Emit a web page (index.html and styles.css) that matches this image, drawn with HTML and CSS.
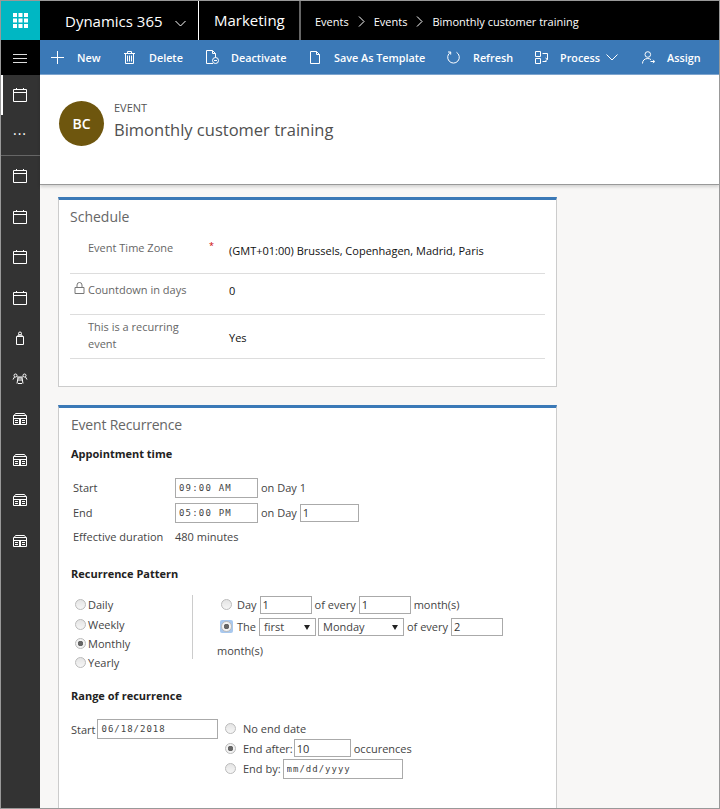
FILE: index.html
```html
<!DOCTYPE html>
<html lang="en">
<head>
    <meta charset="UTF-8">
    <title>Bimonthly customer training</title>
    <link rel="stylesheet" href="styles.css">
</head>
<body>
<svg class="icon-defs" width="0" height="0">
    <symbol id="cal" viewBox="0 0 16 16"><path d="M1.500 2.500h13v12h-13zM1.500 5.500h13M4.500 1v2M11.500 1v2" fill="none" stroke="currentColor"/></symbol>
    <symbol id="dash" viewBox="0 0 16 16"><path d="M2.500 4l1-1.500h9l1 1.500M1.500 4.500h13v9h-13zM1.500 7.500h13M7.500 7.500v6M8.500 7.500v6M3 9.500h3M10 9.500h3M3 11.500h3M10 11.500h3" fill="none" stroke="currentColor"/></symbol>
</svg>
<div class="page">
    <div class="topbar">
        <div class="waffle">
            <svg width="15" height="15" viewBox="0 0 15 15" fill="#fff"><path d="M0 0h4v4H0zM5.500 0h4v4h-4zM11 0h4v4h-4zM0 5.500h4v4H0zM5.500 5.500h4v4h-4zM11 5.500h4v4h-4zM0 11h4v4H0zM5.500 11h4v4h-4zM11 11h4v4h-4z"/></svg>
        </div>
        <div class="app-name">Dynamics 365
            <svg class="app-chevron" width="11" height="7" viewBox="0 0 11 7"><path d="M.5 1l5 5 5-5" fill="none" stroke="#fff"/></svg>
        </div>
        <div class="module-name">Marketing</div>
        <div class="crumbs">
            <span>Events</span>
            <svg width="7" height="11" viewBox="0 0 7 11"><path d="M1 .5l5 5-5 5" fill="none" stroke="#fff"/></svg>
            <span>Events</span>
            <svg width="7" height="11" viewBox="0 0 7 11"><path d="M1 .5l5 5-5 5" fill="none" stroke="#fff"/></svg>
            <span>Bimonthly customer training</span>
        </div>
    </div>

    <div class="main">
        <div class="sidenav">
            <div class="burger"><span></span><span></span><span></span></div>
            <div class="nav-item nav-active"><svg width="16" height="16"><use href="#cal"/></svg></div>
            <div class="nav-more">...</div>
            <div class="nav-group">
                <div class="nav-item"><svg width="16" height="16"><use href="#cal"/></svg></div>
                <div class="nav-item"><svg width="16" height="16"><use href="#cal"/></svg></div>
                <div class="nav-item"><svg width="16" height="16"><use href="#cal"/></svg></div>
                <div class="nav-item"><svg width="16" height="16"><use href="#cal"/></svg></div>
                <div class="nav-item">
                    <svg width="16" height="16" viewBox="0 0 16 16"><path d="M4.500 6.500h7v8h-7zM6 6.500v-1.500h4v1.500M8 5a1.500 1.500 0 1 0 0-3 1.500 1.500 0 0 0 0 3z" fill="none" stroke="currentColor"/></svg>
                </div>
                <div class="nav-item">
                    <svg width="16" height="16" viewBox="0 0 16 16"><path d="M2 4.500a1.500 1.500 0 1 0 3 0 1.500 1.500 0 0 0-3 0zM11 4.500a1.500 1.500 0 1 0 3 0 1.500 1.500 0 0 0-3 0zM1 8.500l1.500-2.500M15 8.500L13.500 6M5 6h6M5.500 7h5M6 7l-1 5.500M10 7l1 5.500M6 12.500h4M5.500 9h5" fill="none" stroke="currentColor"/></svg>
                </div>
                <div class="nav-item"><svg width="16" height="16"><use href="#dash"/></svg></div>
                <div class="nav-item"><svg width="16" height="16"><use href="#dash"/></svg></div>
                <div class="nav-item"><svg width="16" height="16"><use href="#dash"/></svg></div>
                <div class="nav-item"><svg width="16" height="16"><use href="#dash"/></svg></div>
            </div>
        </div>

        <div class="workspace">
            <div class="commandbar">
                <div class="cmd cmd-new">
                    <svg width="13" height="13" viewBox="0 0 13 13"><path d="M6.500 0v13M0 6.500h13" stroke="#fff" fill="none"/></svg>
                    <span>New</span>
                </div>
                <div class="cmd cmd-delete">
                    <svg width="11" height="13" viewBox="0 0 11 13"><path d="M1.500 2.500h8v10h-8zM0 2.500h11M3.500 2.500v-2h4v2M3.500 4.500v6M5.500 4.500v6M7.500 4.500v6" stroke="#fff" fill="none"/></svg>
                    <span>Delete</span>
                </div>
                <div class="cmd cmd-deactivate">
                    <svg width="13" height="14" viewBox="0 0 13 14"><path d="M7 13.500H.5V.5h6l3 3v4M6.500.5v3h3" stroke="#fff" fill="none"/><circle cx="9.500" cy="10.500" r="3" stroke="#fff" fill="none"/><path d="M8 10.500h3" stroke="#fff"/></svg>
                    <span>Deactivate</span>
                </div>
                <div class="cmd cmd-template">
                    <svg width="10" height="13" viewBox="0 0 10 13"><path d="M.5.500h6l3 3v9h-9zM6.500.500v3h3" stroke="#fff" fill="none"/></svg>
                    <span>Save As Template</span>
                </div>
                <div class="cmd cmd-refresh">
                    <svg width="13" height="13" viewBox="0 0 13 13"><path d="M3.500 1.300a5.800 5.800 0 1 0 6 0M3.700 3.600V1H1" stroke="#fff" fill="none"/></svg>
                    <span>Refresh</span>
                </div>
                <div class="cmd cmd-process">
                    <svg width="13" height="13" viewBox="0 0 13 13"><path d="M.5.500h5v5h-5zM.5 7.500h5v5h-5zM7.500 2.500h5v6M7.500 10.500h4M10.500 7l2 1.500-2 1" stroke="#fff" fill="none"/></svg>
                    <span>Process</span>
                    <svg width="12" height="7" viewBox="0 0 12 7"><path d="M.5.500l5.500 5.500 5.500-5.500" stroke="#fff" fill="none"/></svg>
                </div>
                <div class="cmd">
                    <svg width="13" height="13" viewBox="0 0 13 13"><path d="M3 3.500a2.800 2.800 0 1 0 5.600 0 2.800 2.800 0 0 0-5.600 0zM.5 12.500c0-3 2-5 5.300-5 1.500 0 2.500.5 3.200 1.200M8.500 10.500h4M11 8.800l1.700 1.700-1.700 1.700" stroke="#fff" fill="none"/></svg>
                    <span>Assign</span>
                </div>
            </div>

            <div class="record-header">
                <div class="avatar">BC</div>
                <div>
                    <div class="record-type">EVENT</div>
                    <div class="record-title">Bimonthly customer training</div>
                </div>
            </div>

            <div class="content">
                <div class="card card-schedule">
                    <h2>Schedule</h2>
                    <div class="field-row row-zone">
                        <div class="field-label">Event Time Zone<span class="required">*</span></div>
                        <div class="field-value">(GMT+01:00) Brussels, Copenhagen, Madrid, Paris</div>
                    </div>
                    <div class="field-row row-count">
                        <div class="field-label">
                            <svg class="lock" width="11" height="12" viewBox="0 0 11 12"><path d="M1 5.500h9v6H1zM3 5.500V3a2.500 2.500 0 0 1 5 0v2.500" stroke="#777" fill="none"/></svg>
                            Countdown in days
                        </div>
                        <div class="field-value">0</div>
                    </div>
                    <div class="field-row row-recur">
                        <div class="field-label">This is a recurring event</div>
                        <div class="field-value">Yes</div>
                    </div>
                </div>

                <div class="card card-recurrence">
                    <h2>Event Recurrence</h2>
                    <h3 class="time-title">Appointment time</h3>
                    <div class="time-grid">
                        <span>Start</span>
                        <div class="inline"><input class="mono time-input" value="09:00 AM"> on Day 1</div>
                        <span>End</span>
                        <div class="inline"><input class="mono time-input" value="05:00 PM"> on Day <input class="num-input day-input" value="1"></div>
                        <span>Effective duration</span>
                        <span>480 minutes</span>
                    </div>

                    <h3 class="pattern-title">Recurrence Pattern</h3>
                    <div class="pattern">
                        <div class="pattern-types">
                            <label><span class="radio"></span>Daily</label>
                            <label><span class="radio"></span>Weekly</label>
                            <label><span class="radio radio-on"></span>Monthly</label>
                            <label><span class="radio"></span>Yearly</label>
                        </div>
                        <div class="pattern-detail">
                            <div class="inline">
                                <span class="radio"></span>Day <input class="num-input" value="1"> of every <input class="num-input" value="1"> month(s)
                            </div>
                            <div class="inline">
                                <span class="radio radio-on radio-focus"></span>The
                                <div class="fake-select select-first">first</div>
                                <div class="fake-select select-day">Monday</div>
                                of every <input class="num-input" value="2">
                            </div>
                            <div class="wrap-text">month(s)</div>
                        </div>
                    </div>

                    <h3 class="range-title">Range of recurrence</h3>
                    <div class="range">
                        <div class="inline range-start">Start <input class="mono date-input" value="06/18/2018"></div>
                        <div class="range-end">
                            <div class="inline"><span class="radio"></span>No end date</div>
                            <div class="inline"><span class="radio radio-on"></span>End after: <input class="num-input after-input" value="10"> occurences</div>
                            <div class="inline range-by"><span class="radio"></span>End by: <input class="mono by-input" value="mm/dd/yyyy"></div>
                        </div>
                    </div>
                </div>
            </div>
        </div>
    </div>
</div>
</body>
</html>
```

FILE: styles.css
```css
* {
    box-sizing: border-box;
}

html, body {
    margin: 0;
    height: 100%;
    overflow: hidden;
}

body {
    font-family: "Open Sans", "Noto Sans", sans-serif;
    font-size: 11px;
    color: #444;
}

.icon-defs {
    position: absolute;
}

.page {
    height: 809px;
    display: flex;
    flex-direction: column;
    border: 1px solid #999;
    overflow: hidden;
}

/* top black bar */
.topbar {
    height: 39px;
    flex: none;
    display: flex;
    align-items: center;
    background-color: #000;
    color: #fff;
}

.waffle {
    width: 39px;
    height: 39px;
    display: flex;
    align-items: center;
    justify-content: center;
    background-color: #00b7c3;
}

.app-name {
    width: 159px;
    height: 39px;
    padding-left: 25px;
    display: flex;
    align-items: center;
    gap: 12px;
    font-size: 15px;
    border-right: 1px solid #fff;
}

.app-chevron {
    margin-top: 5px;
}

.module-name {
    width: 102px;
    height: 39px;
    padding: 0 0 2px 15px;
    display: flex;
    align-items: center;
    font-size: 15px;
    border-right: 2px solid #666;
}

.crumbs {
    padding: 2px 0 0 14px;
    display: flex;
    align-items: center;
    gap: 9px;
    font-size: 11px;
}

.main {
    flex: 1;
    display: flex;
    min-height: 0;
}

/* left navigation */
.sidenav {
    width: 39px;
    flex: none;
    background-color: #333;
    color: #fff;
}

.burger {
    height: 35px;
    padding: 1px 1px 0 0;
    background-color: #000;
    display: flex;
    flex-direction: column;
    align-items: center;
    justify-content: center;
    gap: 3px;
}

.burger span {
    width: 14px;
    height: 1px;
    background-color: #ddd;
}

.nav-item {
    height: 40.500px;
    padding-right: 1px;
    display: flex;
    align-items: center;
    justify-content: center;
}

.nav-active {
    height: 40px;
    box-shadow: inset 2px 0 0 #fff;
}

.nav-more {
    height: 41px;
    padding-right: 1px;
    text-align: center;
    font-size: 14px;
    line-height: 30px;
    letter-spacing: 1px;
    border-bottom: 1px solid #666;
}

/* blue command bar */
.workspace {
    flex: 1;
    min-width: 0;
    display: flex;
    flex-direction: column;
}

.commandbar {
    height: 35px;
    flex: none;
    display: flex;
    align-items: center;
    padding-left: 11px;
    background-color: #3b79b7;
    border-bottom: 1px solid #7ea6d0;
    color: #fff;
    font-size: 10.800px;
    font-weight: 600;
    white-space: nowrap;
}

.cmd {
    display: flex;
    align-items: center;
    gap: 12px;
}

.cmd-new { width: 73px; gap: 13px; }
.cmd-delete { width: 82px; gap: 14px; }
.cmd-deactivate { width: 104px; }
.cmd-template { width: 137px; gap: 14px; }
.cmd-refresh { width: 88px; gap: 13px; }
.cmd-process { width: 107px; }

.cmd-process span {
    margin-right: -6px;
}

/* record header */
.record-header {
    height: 110px;
    flex: none;
    padding: 26px 0 0 19px;
    display: flex;
    gap: 10px;
    background-color: #fff;
    border-bottom: 1px solid #999;
    box-shadow: 0 2px 3px rgba(0, 0, 0, 0.15);
    position: relative;
}

.avatar {
    width: 45px;
    height: 45px;
    border-radius: 50%;
    background-color: #6e560e;
    color: #fff;
    font-size: 14px;
    font-weight: 600;
    text-align: center;
    line-height: 45px;
}

.record-type {
    font-size: 11px;
    line-height: 14px;
    color: #555;
}

.record-title {
    font-size: 16.500px;
    line-height: 30px;
    color: #505050;
}

/* cards */
.content {
    flex: 1;
    padding: 12px 0 0 18px;
    background-color: #f8f7f6;
    overflow: hidden;
}

.card {
    width: 499px;
    background-color: #fff;
    border: 1px solid #ccc;
    border-top: 3px solid #3b79b7;
    padding: 0 11px;
    position: relative;
    z-index: 0;
}

.card-schedule {
    height: 190px;
    margin-bottom: 18px;
}

.card-recurrence {
    height: 420px;
    padding-left: 12px;
}

.card h2 {
    margin: 0;
    font-size: 14px;
    font-weight: 400;
    line-height: 20px;
    padding-top: 7px;
    height: 31px;
    color: #666;
}

.card-recurrence h2 {
    letter-spacing: -0.2px;
}

.card h3 {
    margin: 0;
    font-size: 11px;
    font-weight: 700;
    color: #222;
}

.field-row {
    display: flex;
    border-bottom: 1px solid #ddd;
    width: 475px;
}

.field-label {
    width: 159px;
    padding-left: 18px;
    color: #666;
    position: relative;
}

.field-value {
    color: #111;
    font-size: 11px;
    font-weight: 500;
}

.required {
    position: absolute;
    left: 139px;
    top: -2px;
    font-size: 9px;
    color: #c00;
}

.lock {
    position: absolute;
    left: 4px;
    top: 0;
}

.row-zone {
    height: 43px;
    line-height: 15px;
    padding-top: 9px;
}

.row-zone .field-value {
    padding-top: 3px;
}

.row-count {
    height: 41px;
    padding-top: 8px;
    line-height: 15px;
}

.row-count .field-value {
    padding-top: 1px;
}

.row-recur {
    height: 44px;
    padding-top: 3px;
    line-height: 17px;
    align-items: flex-start;
}

.row-recur .field-label {
    padding-right: 30px;
}

.row-recur .field-value {
    padding-top: 11px;
}

/* recurrence form */
.inline {
    display: flex;
    align-items: center;
    gap: 3px;
    white-space: nowrap;
}

input {
    font-family: inherit;
    font-size: 11px;
    height: 18px;
    border: 1px solid #aaa;
    padding: 0 2px;
    color: #333;
    background-color: #fff;
    margin: 0;
}

.mono {
    font-family: "DejaVu Sans Mono", monospace;
    font-size: 9px;
    letter-spacing: 1px;
    padding-left: 3px;
    color: #444;
}

.time-title {
    margin-top: 7px !important;
}

.time-grid {
    display: grid;
    grid-template-columns: 102px 1fr;
    grid-template-rows: 25px 25px 23px;
    align-items: center;
    padding: 14px 0 0 2px;
    color: #444;
}

.time-input {
    width: 83px;
    height: 20px;
    letter-spacing: 1.200px;
}

.num-input {
    width: 52px;
}

.day-input {
    width: 59px;
}

.pattern-title {
    margin-top: 18px !important;
}

.pattern {
    display: flex;
    margin-top: 14px;
}

.pattern-types {
    width: 122px;
    padding-left: 4px;
    border-right: 1px solid #ccc;
    height: 64px;
}

.pattern-types label {
    display: flex;
    align-items: center;
    height: 19.400px;
}

.pattern-detail {
    padding-left: 28px;
    display: flex;
    flex-direction: column;
    gap: 3px;
}

.pattern-detail .inline {
    height: 19px;
}

.wrap-text {
    margin: 4px 0 0 -4px;
}

.radio {
    width: 11px;
    height: 11px;
    flex: none;
    border: 1px solid #bbb;
    border-radius: 50%;
    background: linear-gradient(#e4e4e4, #f6f6f6);
    margin-right: 2px;
}

.radio-on {
    background: radial-gradient(circle, #666 0 2.500px, #f3f3f3 3px);
}

.radio-focus {
    position: relative;
}

.radio-focus::before {
    content: "";
    position: absolute;
    inset: -2px;
    border-radius: 2px;
    background-color: #a8c8ee;
    z-index: -1;
}

.fake-select {
    height: 18px;
    border: 1px solid #aaa;
    background-color: #fff;
    padding: 0 4px;
    line-height: 16px;
    position: relative;
}

.fake-select::after {
    content: "";
    position: absolute;
    right: 5px;
    top: 6px;
    border: 3.500px solid transparent;
    border-top: 5px solid #222;
    border-bottom: 0;
}

.select-first {
    width: 57px;
}

.select-day {
    width: 86px;
    margin-left: -1px;
}

.range-title {
    margin-top: 29px !important;
}

.range {
    display: flex;
    margin-top: 16px;
}

.range-start {
    width: 154px;
    height: 20px;
}

.date-input {
    width: 121px;
    height: 20px;
    margin-left: -1px;
}

.range-end {
    display: flex;
    flex-direction: column;
}

.range-end .inline {
    height: 19.500px;
}

.range-end .radio {
    margin-right: 4px;
}

.range-end .range-by {
    margin-top: 1px;
}

.after-input {
    width: 57px;
    margin-left: -2px;
}

.by-input {
    width: 120px;
    height: 20px;
    margin-left: -1px;
}
```
